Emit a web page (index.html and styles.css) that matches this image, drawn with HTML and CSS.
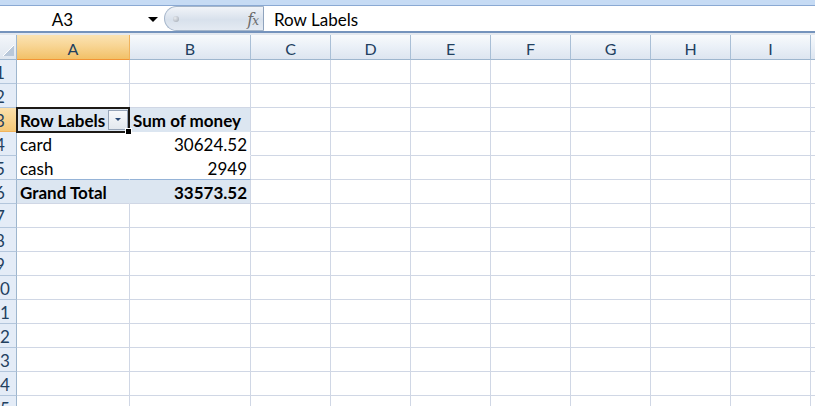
FILE: index.html
```html
<!DOCTYPE html>
<html>
<head>
<meta charset="utf-8">
<link rel="stylesheet" href="styles.css">
</head>
<body>
<div class="app">
  <div class="topstrip"></div>
  <div class="fbar">
    <div class="namebox">A3</div>
    <div class="nbdrop"><span class="tri"></span></div>
    <div class="capsule"><span class="dot"></span><span class="fx"><i>f</i><i class="fxx">x</i></span></div>
    <div class="formula">Row Labels</div>
  </div>
  <div class="fgap"></div>
  <div class="sheet">
    <div class="row head">
      <div class="corner"><svg width="16" height="24" viewBox="0 0 16 24"><polygon points="3,21 14,21 14,10" fill="#b9c8da"/><polyline points="3,21 14,10" stroke="#ffffff" stroke-width="1" fill="none"/></svg></div>
      <div class="ch sel">A</div><div class="ch">B</div><div class="ch">C</div><div class="ch">D</div><div class="ch">E</div><div class="ch">F</div><div class="ch">G</div><div class="ch">H</div><div class="ch">I</div><div class="ch"></div>
    </div>
    <div class="row"><div class="rh"><span>1</span></div><div class="c"></div><div class="c"></div><div class="c"></div><div class="c"></div><div class="c"></div><div class="c"></div><div class="c"></div><div class="c"></div><div class="c"></div><div class="c"></div></div>
    <div class="row"><div class="rh"><span>2</span></div><div class="c"></div><div class="c"></div><div class="c"></div><div class="c"></div><div class="c"></div><div class="c"></div><div class="c"></div><div class="c"></div><div class="c"></div><div class="c"></div></div>
    <div class="row"><div class="rh rsel"><span>3</span></div>
      <div class="c pv-h pv-a active"><span>Row Labels</span><span class="ddbtn"><span class="ddtri"></span></span><span class="selbox"><span class="handle"></span></span></div>
      <div class="c pv-h"><span>Sum of money</span></div>
      <div class="c"></div><div class="c"></div><div class="c"></div><div class="c"></div><div class="c"></div><div class="c"></div><div class="c"></div><div class="c"></div></div>
    <div class="row"><div class="rh"><span>4</span></div>
      <div class="c pv pv-a">card</div><div class="c pv num">30624.52</div>
      <div class="c"></div><div class="c"></div><div class="c"></div><div class="c"></div><div class="c"></div><div class="c"></div><div class="c"></div><div class="c"></div></div>
    <div class="row"><div class="rh"><span>5</span></div>
      <div class="c pv pv-a pv-last">cash</div><div class="c pv num pv-last">2949</div>
      <div class="c"></div><div class="c"></div><div class="c"></div><div class="c"></div><div class="c"></div><div class="c"></div><div class="c"></div><div class="c"></div></div>
    <div class="row"><div class="rh"><span>6</span></div>
      <div class="c pv-t pv-a">Grand Total</div><div class="c pv-t num">33573.52</div>
      <div class="c"></div><div class="c"></div><div class="c"></div><div class="c"></div><div class="c"></div><div class="c"></div><div class="c"></div><div class="c"></div></div>
    <div class="row"><div class="rh"><span>7</span></div><div class="c"></div><div class="c"></div><div class="c"></div><div class="c"></div><div class="c"></div><div class="c"></div><div class="c"></div><div class="c"></div><div class="c"></div><div class="c"></div></div>
    <div class="row"><div class="rh"><span>8</span></div><div class="c"></div><div class="c"></div><div class="c"></div><div class="c"></div><div class="c"></div><div class="c"></div><div class="c"></div><div class="c"></div><div class="c"></div><div class="c"></div></div>
    <div class="row"><div class="rh"><span>9</span></div><div class="c"></div><div class="c"></div><div class="c"></div><div class="c"></div><div class="c"></div><div class="c"></div><div class="c"></div><div class="c"></div><div class="c"></div><div class="c"></div></div>
    <div class="row"><div class="rh"><span>10</span></div><div class="c"></div><div class="c"></div><div class="c"></div><div class="c"></div><div class="c"></div><div class="c"></div><div class="c"></div><div class="c"></div><div class="c"></div><div class="c"></div></div>
    <div class="row"><div class="rh"><span>11</span></div><div class="c"></div><div class="c"></div><div class="c"></div><div class="c"></div><div class="c"></div><div class="c"></div><div class="c"></div><div class="c"></div><div class="c"></div><div class="c"></div></div>
    <div class="row"><div class="rh"><span>12</span></div><div class="c"></div><div class="c"></div><div class="c"></div><div class="c"></div><div class="c"></div><div class="c"></div><div class="c"></div><div class="c"></div><div class="c"></div><div class="c"></div></div>
    <div class="row"><div class="rh"><span>13</span></div><div class="c"></div><div class="c"></div><div class="c"></div><div class="c"></div><div class="c"></div><div class="c"></div><div class="c"></div><div class="c"></div><div class="c"></div><div class="c"></div></div>
    <div class="row"><div class="rh"><span>14</span></div><div class="c"></div><div class="c"></div><div class="c"></div><div class="c"></div><div class="c"></div><div class="c"></div><div class="c"></div><div class="c"></div><div class="c"></div><div class="c"></div></div>
    <div class="row"><div class="rh"><span>15</span></div><div class="c"></div><div class="c"></div><div class="c"></div><div class="c"></div><div class="c"></div><div class="c"></div><div class="c"></div><div class="c"></div><div class="c"></div><div class="c"></div></div>
  </div>
</div>
</body>
</html>
```
FILE: styles.css
```css
* { box-sizing: border-box; }
html, body { margin: 0; padding: 0; background: #ffffff; }
body { width: 815px; height: 406px; overflow: hidden; font-family: Lato, "Noto Sans", sans-serif; font-size: 17px; color: #000; }
.app { width: 815px; height: 406px; overflow: hidden; }

.topstrip { height: 6px; background: #c6dbf4; border-bottom: 1px solid #8aa9d3; }

.fbar { display: flex; height: 25px; background: #fff; }
.namebox { width: 125px; display: flex; align-items: center; justify-content: center; padding-top: 1px; }
.nbdrop { width: 39px; display: flex; align-items: center; padding-left: 23px; padding-top: 1px; }
.tri { width: 0; height: 0; border-left: 5px solid transparent; border-right: 5px solid transparent; border-top: 5px solid #000; }
.capsule { width: 100px; height: 25px; display: flex; align-items: center; justify-content: space-between;
  border: 1px solid #a4b5ca; border-right-color: #8fa3bd; border-radius: 13px 0 0 13px;
  background: linear-gradient(#f1f4f8, #d8e1ec 55%, #e4eaf2); padding: 0 5px 0 8px; }
.dot { width: 6px; height: 6px; border-radius: 50%; background: radial-gradient(circle at 35% 35%, #e8ebef, #9ea6b1); }
.fx { font-family: "DejaVu Serif", "Liberation Serif", serif; color: #6b6b6b; font-size: 16px; line-height: 1; padding-top: 2px; letter-spacing: -1px; }
.fx i { font-style: italic; }
.fx .fxx { font-size: 12px; }
.formula { flex: 1; display: flex; align-items: center; padding-left: 10px; padding-top: 1px; }

.fgap { height: 4px; border-top: 2px solid #7593bc; background: #e3e8ef; }

.sheet { width: 815px; overflow: hidden; }
.row { display: grid; grid-template-columns: 17px 113px 121px repeat(8, 80px); height: 24px; width: 891px; }
.row.head { height: 25px; }

.corner { border-right: 1px solid #9eb6ce; border-bottom: 1px solid #9eb6ce; background: linear-gradient(#f3f6fa, #dfe6ef); }
.corner svg { display: block; }
.ch { display: flex; align-items: center; justify-content: center; padding-top: 3px; color: #22405f; font-size: 16px;
  background: linear-gradient(#f8fafc, #eaf0f7 50%, #dde5f0); border-right: 1px solid #a9bfd6; border-bottom: 1px solid #9eb6ce; }
.ch.sel { background: linear-gradient(#fbe3b3, #f8d594 45%, #f2c167); border-right-color: #f1b35c; border-bottom-color: #f29536; }

.rh { overflow: hidden; background: #e4ecf7; border-right: 1px solid #9eb6ce; border-bottom: 1px solid #b3c6dc; color: #22405f; display: flex; align-items: flex-end; }
.rh span { display: block; width: 32px; flex: none; margin-left: -16px; text-align: center; line-height: 20px; }
.rh.rsel { background: linear-gradient(#fbe0ab, #f4c877); border-right-color: #f29536; border-bottom-color: #f1b35c; }

.c { border-right: 1px solid #d0d7e5; border-bottom: 1px solid #d0d7e5; display: flex; align-items: flex-end; padding: 0 3px; line-height: 20px; white-space: nowrap; }

.pv-h { background: #dce6f1; font-weight: bold; border-bottom-color: #dce6f1; }
.pv-a { border-right-color: #ffffff; }
.pv-h.pv-a { border-right-color: #dce6f1; }
.pv { background: #fff; border-bottom-color: #ffffff; }
.pv-last { border-bottom-color: #95b3d7; }
.pv-t { background: #dce6f1; font-weight: bold; }
.pv-t.pv-a { border-right-color: #dce6f1; }
.num { justify-content: flex-end; }

.active { position: relative; justify-content: space-between; padding-right: 1px; }
.ddbtn { align-self: center; width: 20px; height: 20px; border: 1px solid #97a5b8; background: linear-gradient(#f7f9fb, #e3e8ee); display: flex; align-items: center; justify-content: center; }
.ddtri { width: 0; height: 0; border-left: 3px solid transparent; border-right: 3px solid transparent; border-top: 3px solid #2a4a76; }
.selbox { position: absolute; top: -1px; left: -1px; right: -1px; bottom: -2px; border: 2px solid #1d1a16; z-index: 2; }
.handle { position: absolute; right: -4px; bottom: -4px; width: 7px; height: 7px; background: #000; border: 1px solid #fff; }
```
